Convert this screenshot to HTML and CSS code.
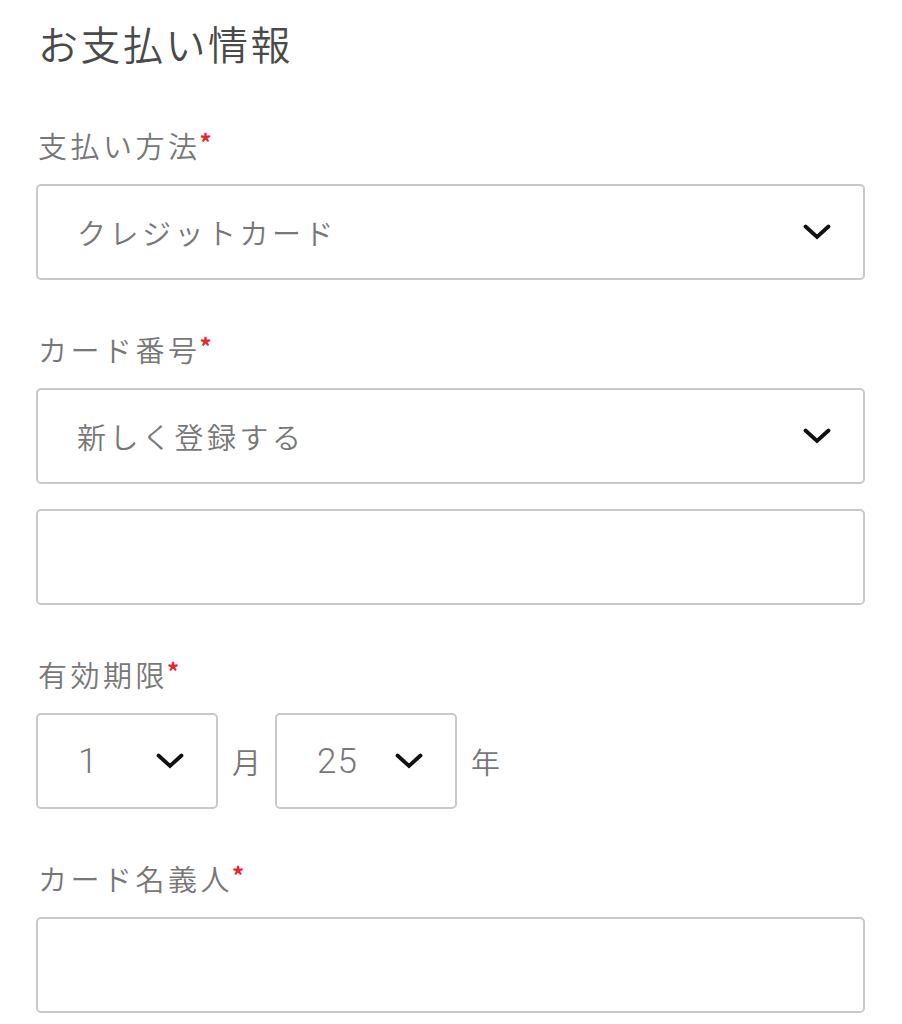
FILE: index.html
```html
<!DOCTYPE html>
<html lang="ja">
<head>
<meta charset="utf-8">
<link rel="stylesheet" href="styles.css">
</head>
<body>
<div class="page">
  <h1 class="title">お支払い情報</h1>

  <div class="field">
    <div class="label">支払い方法<span class="req">*</span></div>
    <div class="select">
      <span class="value">クレジットカード</span>
      <svg class="chev" width="28" height="16" viewBox="0 0 28 16"><path d="M2.5 2.5 L14 13 L25.5 2.5" fill="none" stroke="#111" stroke-width="3.8" stroke-linecap="round" stroke-linejoin="miter"/></svg>
    </div>
  </div>

  <div class="field">
    <div class="label">カード番号<span class="req">*</span></div>
    <div class="select">
      <span class="value">新しく登録する</span>
      <svg class="chev" width="28" height="16" viewBox="0 0 28 16"><path d="M2.5 2.5 L14 13 L25.5 2.5" fill="none" stroke="#111" stroke-width="3.8" stroke-linecap="round" stroke-linejoin="miter"/></svg>
    </div>
    <input class="input gap" type="text">
  </div>

  <div class="field">
    <div class="label">有効期限<span class="req">*</span></div>
    <div class="row">
      <div class="select small">
        <span class="value num">1</span>
        <svg class="chev" width="28" height="16" viewBox="0 0 28 16"><path d="M2.5 2.5 L14 13 L25.5 2.5" fill="none" stroke="#111" stroke-width="3.8" stroke-linecap="round" stroke-linejoin="miter"/></svg>
      </div>
      <span class="unit">月</span>
      <div class="select small">
        <span class="value num">25</span>
        <svg class="chev" width="28" height="16" viewBox="0 0 28 16"><path d="M2.5 2.5 L14 13 L25.5 2.5" fill="none" stroke="#111" stroke-width="3.8" stroke-linecap="round" stroke-linejoin="miter"/></svg>
      </div>
      <span class="unit">年</span>
    </div>
  </div>

  <div class="field">
    <div class="label">カード名義人<span class="req">*</span></div>
    <input class="input" type="text">
  </div>
</div>
</body>
</html>
```

FILE: styles.css
```css
html, body {
  margin: 0;
  padding: 0;
  background: #ffffff;
}

body {
  font-family: "Noto Sans CJK JP", "Noto Sans", sans-serif;
}

.page {
  width: 829px;
  padding: 23px 0 0 36px;
  display: flex;
  flex-direction: column;
}

.title {
  margin: 0 0 0 2px;
  font-size: 40px;
  line-height: 40px;
  font-weight: 350;
  color: #4a4a4a;
  letter-spacing: 2.5px;
}

.field {
  display: flex;
  flex-direction: column;
  margin-top: 67px;
}

.field + .field {
  margin-top: 54px;
}

.label {
  margin-left: 2px;
  font-size: 29px;
  line-height: 30px;
  font-weight: 350;
  color: #777777;
  letter-spacing: 3.5px;
  margin-bottom: 24px;
}

.req {
  color: #e8262d;
  font-size: 24px;
  line-height: 1;
  vertical-align: top;
  font-weight: 700;
  letter-spacing: 0;
  margin-left: -1px;
}

.select {
  box-sizing: border-box;
  height: 96px;
  border: 2px solid #c9c9c9;
  border-radius: 5px;
  display: flex;
  align-items: center;
  justify-content: space-between;
  padding: 0 32px 0 39px;
}

.value {
  font-size: 29px;
  font-weight: 350;
  color: #777777;
  letter-spacing: 3.5px;
}

.value.num {
  font-family: Roboto, "Liberation Sans", sans-serif;
  font-size: 35px;
  font-weight: 300;
  letter-spacing: 1px;
  color: #777777;
}

.chev {
  display: block;
}

.input {
  box-sizing: border-box;
  width: 100%;
  height: 96px;
  margin: 0;
  border: 2px solid #c9c9c9;
  border-radius: 5px;
  background: #fff;
  outline: none;
  font: inherit;
}

.input.gap {
  margin-top: 25px;
}

.row {
  display: flex;
  align-items: center;
}

.select.small {
  width: 182px;
  padding: 0 32px 0 40px;
}

.unit {
  font-size: 29px;
  font-weight: 350;
  color: #777777;
  margin: 0 14px;
}
```
